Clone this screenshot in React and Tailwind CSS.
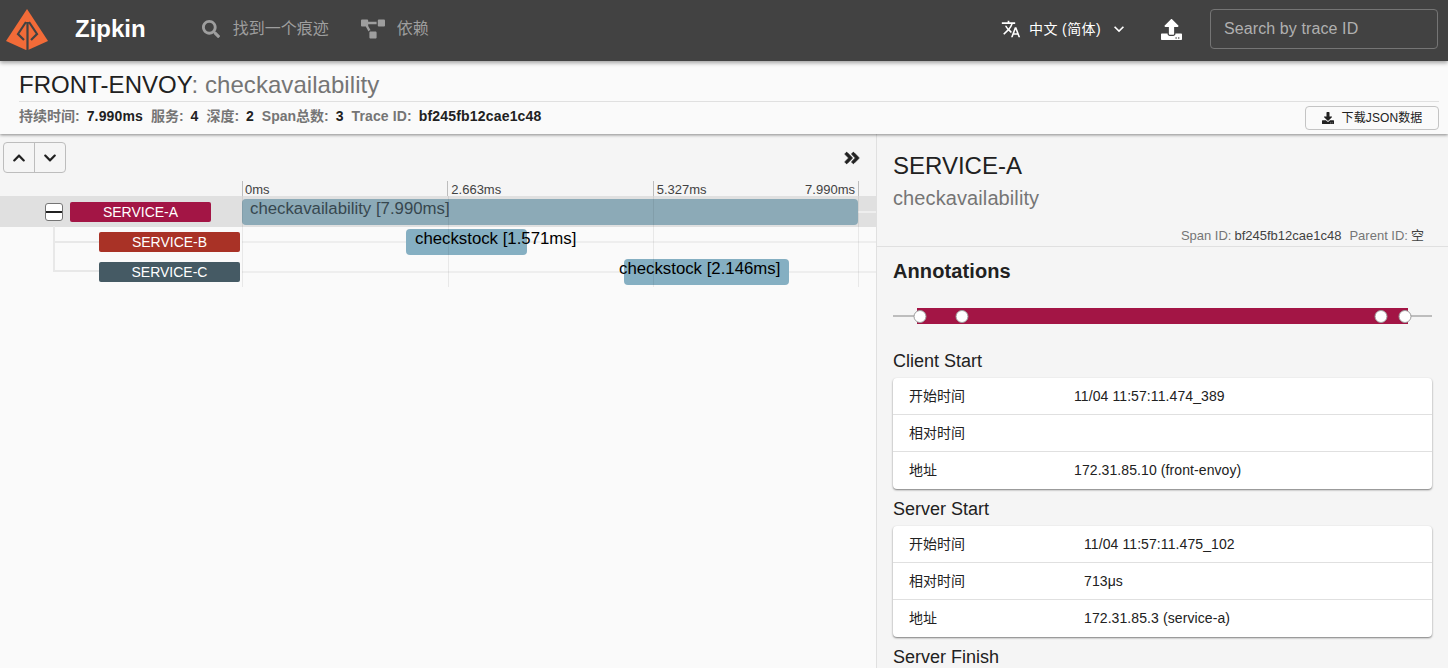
import {
  FaSearch,
  FaProjectDiagram,
  FaUpload,
  FaDownload,
  FaChevronUp,
  FaChevronDown,
  FaAngleDoubleRight,
} from "react-icons/fa";
import { MdTranslate, MdKeyboardArrowDown } from "react-icons/md";

const ticks = ["0ms", "2.663ms", "5.327ms", "7.990ms"];

const rows = [
  { name: "SERVICE-A", color: "bg-[#a31545]", indent: "pl-[70px]", label: "checkavailability [7.990ms]", left: 0, width: 616, selected: true, textLeft: 8 },
  { name: "SERVICE-B", color: "bg-[#a93226]", indent: "pl-[99px]", label: "checkstock [1.571ms]", left: 164, width: 121, textLeft: 9 },
  { name: "SERVICE-C", color: "bg-[#455a64]", indent: "pl-[99px]", label: "checkstock [2.146ms]", left: 381.5, width: 165.5, textLeft: -4.5 },
];

const annotations = [
  {
    title: "Client Start",
    valueWidth: "w-[165px]",
    rows: [
      ["开始时间", "11/04 11:57:11.474_389"],
      ["相对时间", ""],
      ["地址", "172.31.85.10 (front-envoy)"],
    ],
  },
  {
    title: "Server Start",
    valueWidth: "w-[175px]",
    rows: [
      ["开始时间", "11/04 11:57:11.475_102"],
      ["相对时间", "713μs"],
      ["地址", "172.31.85.3 (service-a)"],
    ],
  },
];

function Logo() {
  return (
    <svg width="54" height="54" viewBox="0 0 54 54" className="shrink-0 self-start">
      <polygon points="27,9 48,41 28,50 26,50 6,41" fill="#f26b38" />
      <path
        d="M27.5 22V50M26 22L18 34L24 40M29 22L37 34L31 40"
        fill="none"
        stroke="#424242"
        strokeWidth="2.2"
      />
    </svg>
  );
}

function Header() {
  return (
    <header className="relative z-20 flex h-[61px] shrink-0 items-center bg-[#424242] pb-[3px] shadow-[0_2px_4px_rgba(0,0,0,0.35)]">
      <Logo />
      <div className="ml-[21px] text-[24px] font-bold text-white">Zipkin</div>
      <div className="ml-[56px] flex items-center text-[16px] text-[#9e9e9e]">
        <FaSearch className="text-[18px]" />
        <span className="ml-[13px]">找到一个痕迹</span>
      </div>
      <div className="ml-[32px] flex items-center text-[16px] text-[#9e9e9e]">
        <FaProjectDiagram className="text-[24px]" />
        <span className="ml-[12px]">依赖</span>
      </div>
      <div className="ml-auto flex items-center text-[14px] text-white">
        <MdTranslate className="text-[20px]" />
        <span className="ml-[8px] tracking-[0.4px]">中文 (简体)</span>
        <MdKeyboardArrowDown className="ml-[8px] text-[20px]" />
      </div>
      <FaUpload className="ml-[32px] text-[21px] text-white" />
      <div className="ml-[28px] mr-[10px] flex h-[40px] w-[228px] items-center rounded-[4px] border border-[#757575] px-[13px] text-[16px] tracking-[0.1px] text-[#b0b0b0]">
        Search by trace ID
      </div>
    </header>
  );
}

function SubHeader() {
  return (
    <section className="relative z-10 h-[73px] shrink-0 bg-[#fafafa] pl-[19px] pr-[9px] pt-[7px] shadow-[0_1px_3px_rgba(0,0,0,0.45)]">
      <div className="border-b border-[#e0e0e0] text-[24px] leading-[33px] tracking-[0.05px] text-[#212121]">
        FRONT-ENVOY<span className="text-[#757575]">: checkavailability</span>
      </div>
      <div className="flex items-start justify-between">
        <div className="mt-[6px] flex text-[14px] font-bold leading-[16px] text-[#757575]">
          <span>持续时间:</span>
          <span className="ml-[7px] mr-[8px] tracking-[0.14px] text-[#212121]">7.990ms</span>
          <span>服务:</span>
          <span className="ml-[7px] mr-[8px] text-[#212121]">4</span>
          <span>深度:</span>
          <span className="ml-[7px] mr-[8px] text-[#212121]">2</span>
          <span>Span总数:</span>
          <span className="ml-[7px] mr-[8px] text-[#212121]">3</span>
          <span className="tracking-[0.12px]">Trace ID:</span>
          <span className="ml-[7px] tracking-[0.18px] text-[#212121]">bf245fb12cae1c48</span>
        </div>
        <button className="mt-[4px] flex h-[24px] w-[134px] items-center justify-center rounded-[4px] border border-[#c4c4c4] text-[12px] tracking-[0.1px] text-[#212121]">
          <FaDownload className="mr-[8px] text-[12px]" />
          下载JSON数据
        </button>
      </div>
    </section>
  );
}

function TraceRow({ row }) {
  return (
    <div className={`relative flex ${row.selected ? "-mb-[1px] h-[31px] bg-[#e0e0e0]" : "h-[30px]"}`}>
      <div className="absolute left-[242px] right-0 top-[15px] h-[2px] bg-[#eeeeee]" />
      <div className={`flex h-[30px] w-[242px] shrink-0 items-center pt-[2px] ${row.indent}`}>
        <div className={`flex h-[20px] w-[141px] items-center justify-center rounded-[2px] text-[14px] text-white ${row.color}`}>
          {row.name}
        </div>
      </div>
      <div className="relative flex-1">
        <div
          className={`absolute top-[3px] h-[26px] rounded-[4px] ${row.selected ? "bg-[#8caab7]" : "bg-[#85afc2]"}`}
          style={{ left: row.left, width: row.width }}
        />
        <div
          className={`absolute top-[3px] whitespace-nowrap text-[16.8px] leading-[20px] ${row.selected ? "text-[#37474f]" : "text-black"}`}
          style={{ left: row.left + row.textLeft }}
        >
          {row.label}
        </div>
      </div>
    </div>
  );
}

function Timeline() {
  return (
    <div className="relative">
      <div className="flex h-[15px] bg-[#f5f5f5] pl-[242px] text-[13px] leading-[17px] text-[#424242]">
        <div className="flex w-[617px]">
          {ticks.slice(0, 3).map((t, i) => (
            <div
              key={t}
              className={`flex-1 border-l border-[#bdbdbd] pl-[3px] ${i === 2 ? "relative border-r" : ""}`}
            >
              <span className={i === 0 ? "-ml-[1px]" : ""}>{t}</span>
              {i === 2 && <span className="absolute right-[3px] top-0">{ticks[3]}</span>}
            </div>
          ))}
        </div>
      </div>
      {rows.map((row) => (
        <TraceRow key={row.name} row={row} />
      ))}
      {/* grid lines over the rows */}
      <div className="pointer-events-none absolute left-[242px] top-[15px] h-[91px] w-[617px] border-x border-black/[0.07]">
        <div className="absolute left-[205px] top-0 h-full w-px bg-black/[0.07]" />
        <div className="absolute left-[410px] top-0 h-full w-px bg-black/[0.07]" />
      </div>
      {/* tree */}
      <div className="absolute left-[53px] top-[45px] h-[46px] w-[46px] border-b-2 border-l-2 border-[#e8e8e8]" />
      <div className="absolute left-[53px] top-[60px] h-[2px] w-[46px] bg-[#e8e8e8]" />
      <div className="absolute left-[45px] top-[22px] flex h-[18px] w-[18px] items-center rounded-[3px] border border-[#757575] bg-white">
        <div className="h-[2px] w-full bg-[#212121]" />
      </div>
    </div>
  );
}

function LeftPanel() {
  return (
    <div className="w-[876px] shrink-0 bg-[#fafafa]">
      <div className="bg-[#f5f5f5]">
        <div className="flex h-[47px] items-start justify-between pl-[3px] pr-[15px] pt-[8px]">
          <div className="flex h-[31px] w-[63px] rounded-[4px] border border-[#bdbdbd]">
            <div className="flex flex-1 items-center justify-center border-r border-[#bdbdbd]">
              <FaChevronUp className="text-[14px] text-[#212121]" />
            </div>
            <div className="flex flex-1 items-center justify-center">
              <FaChevronDown className="text-[14px] text-[#212121]" />
            </div>
          </div>
          <FaAngleDoubleRight className="mt-[7px] text-[18px] text-[#212121]" stroke="currentColor" strokeWidth={24} />
        </div>
      </div>
      <Timeline />
    </div>
  );
}

function AnnotationCard({ item }) {
  return (
    <div>
      <div className="text-[18px] leading-[22px] text-[#212121]">{item.title}</div>
      <div className="mt-[6px] rounded-[4px] bg-white shadow-[0_1px_2px_rgba(0,0,0,0.5)]">
        {item.rows.map(([k, v], i) => (
          <div key={k} className={`flex h-[37px] items-center pl-[16px] text-[14px] text-[#212121] ${i < 2 ? "border-b border-[#e0e0e0]" : "pb-[1px]"}`}>
            <div className={`shrink-0 ${item.valueWidth}`}>{k}</div>
            <div className="tracking-[0.09px]">{v}</div>
          </div>
        ))}
      </div>
    </div>
  );
}

function RightPanel() {
  return (
    <aside className="min-w-0 flex-1 overflow-hidden border-l border-[#e0e0e0] bg-[#f5f5f5]">
      <div className="h-[113px] border-b border-[#e0e0e0] px-[16px] pt-[17px]">
        <div className="text-[24px] leading-[30px] text-[#212121]">SERVICE-A</div>
        <div className="mt-[2px] text-[20px] leading-[30px] tracking-[0.1px] text-[#757575]">checkavailability</div>
        <div className="mt-[15px] flex justify-end pr-[8px] text-[13px] leading-[16px] text-[#757575]">
          Span ID:<span className="ml-[3px] text-[#424242]">bf245fb12cae1c48</span>
          <span className="ml-[8px]">Parent ID:</span><span className="ml-[3px] text-[#424242]">空</span>
        </div>
      </div>
      <div className="px-[16px] pt-[11px]">
        <div className="text-[20px] font-bold leading-[26px] tracking-[0.1px] text-[#212121]">Annotations</div>
        <div className="relative mt-[24px] flex h-[16px] items-center">
          <div className="h-[2px] w-full bg-[#bdbdbd]" />
          <div className="absolute left-[24px] right-[24px] top-0 h-[16px] bg-[#a31545]" />
          {[27, 69, 488, 512].map((x) => (
            <div
              key={x}
              className="absolute top-[1.5px] h-[13px] w-[13px] -translate-x-1/2 rounded-full border border-[#9e9e9e] bg-white"
              style={{ left: x }}
            />
          ))}
        </div>
        <div className="mt-[26px] flex flex-col gap-[9px]">
          {annotations.map((item) => (
            <AnnotationCard key={item.title} item={item} />
          ))}
          <div className="text-[18px] leading-[22px] text-[#212121]">Server Finish</div>
        </div>
      </div>
    </aside>
  );
}

export default function App() {
  return (
    <div className="flex h-screen flex-col overflow-hidden font-['Liberation_Sans','Noto_Sans_CJK_SC',sans-serif]">
      <Header />
      <SubHeader />
      <div className="flex min-h-0 flex-1">
        <LeftPanel />
        <RightPanel />
      </div>
    </div>
  );
}
